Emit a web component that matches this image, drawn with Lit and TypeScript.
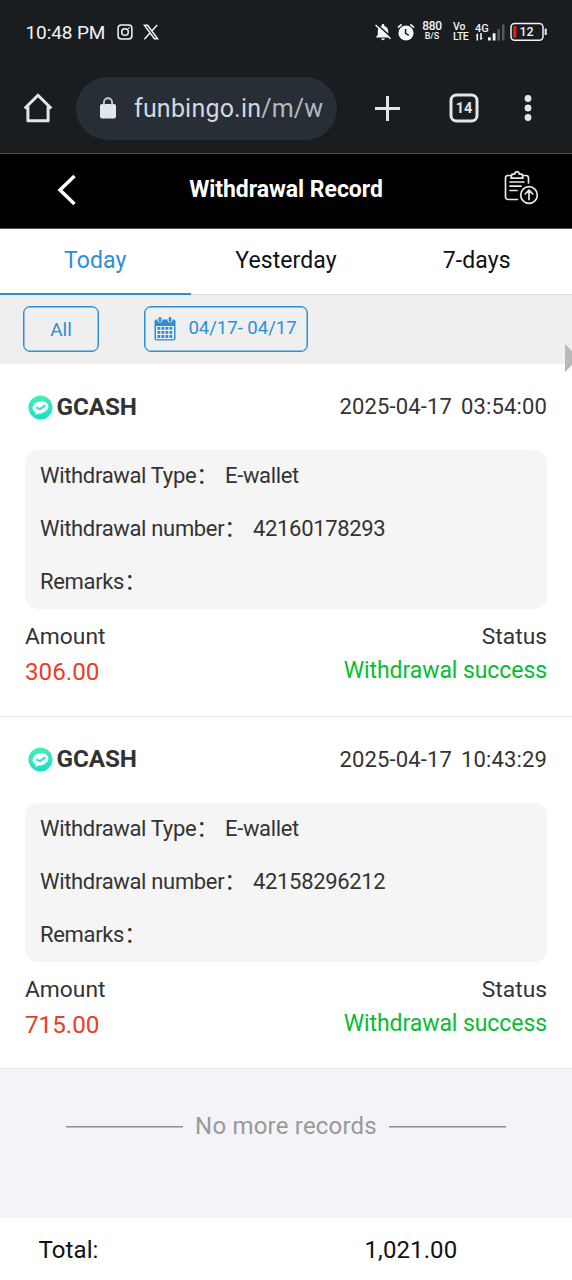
import { LitElement, html, css, svg } from "lit";
import { customElement, property } from "lit/decorators.js";

interface WithdrawalRecord {
  date: string;
  time: string;
  account: string;
  amount: string;
}

const records: WithdrawalRecord[] = [
  { date: "2025-04-17", time: "03:54:00", account: "42160178293", amount: "306.00" },
  { date: "2025-04-17", time: "10:43:29", account: "42158296212", amount: "715.00" },
];

const calendarDots = [0, 1, 2, 3].flatMap((c) =>
  [0, 1, 2].map((r) => svg`<rect x=${3.4 + c * 4} y=${9.9 + r * 4.1} width="2.9" height="2.8" rx=".4" fill="#2b8fd6"/>`)
);

@customElement("status-bar")
class StatusBar extends LitElement {
  static styles = css`
    :host { display: flex; align-items: center; height: 64px; padding: 0 25px 0 25.5px; box-sizing: border-box; color: #f1f3f4; }
    .time { font-size: 19px; line-height: 24px; width: 91px; padding-top: 1px; letter-spacing: -0.1px; white-space: nowrap; }
    svg { display: block; flex: none; }
    .x { margin-left: 10px; }
    .spacer { flex: 1; }
    .alarm { margin-left: 6px; }
    .stack { display: flex; flex-direction: column; align-items: center; font-weight: 500; }
    .speed { width: 22px; margin-left: 6px; padding-bottom: 2px; }
    .speed .big { font-size: 12px; line-height: 11px; letter-spacing: -0.3px; }
    .speed .small { font-size: 9px; line-height: 9px; }
    .volte { margin-left: 10px; width: 17px; align-items: flex-start; font-size: 10.5px; line-height: 10px; }
    .volte span + span { letter-spacing: -0.5px; }
    .signal { margin-left: 5px; }
    .battery { margin-left: 4px; }
  `;
  render() {
    return html`
      <span class="time">10:48 PM</span>
      <svg width="16" height="16" viewBox="0 0 16 16" fill="none" stroke="#f1f3f4" stroke-width="1.5">
        <rect x="1.1" y="1.1" width="13.8" height="13.8" rx="3.2"/><circle cx="8" cy="8" r="3.3"/><circle cx="12" cy="4" r=".4" stroke-width="1"/>
      </svg>
      <svg class="x" width="16" height="16" viewBox="0 0 16 16" fill="none" stroke="#f1f3f4" stroke-width="1.5">
        <path d="M1.4 1.200h3.200l10 13.600h-3.200z M14.200 .9L9 6.800 M7 9.100L1.400 15.200"/>
      </svg>
      <span class="spacer"></span>
      <svg width="16" height="18" viewBox="0 0 16 18">
        <path d="M8 1c.8 0 1.300.5 1.300 1.300v.6c2.400.6 3.900 2.500 3.900 5v4l1.600 1.800v.8H1.200v-.8l1.600-1.800v-4c0-2.500 1.500-4.400 3.900-5v-.6C6.700 1.500 7.200 1 8 1zM6.200 15.500h3.600c0 1-.8 1.700-1.800 1.700s-1.800-.7-1.800-1.700z" fill="#f1f3f4"/>
        <path d="M1.500 .8L16 14" stroke="#1a1d20" stroke-width="1.600"/><path d="M.5 2L15.500 15.800" stroke="#f1f3f4" stroke-width="1.500"/>
      </svg>
      <svg class="alarm" width="18" height="18" viewBox="0 0 18 18" fill="none">
        <circle cx="9" cy="10" r="7.600" fill="#f1f3f4"/><path d="M1 4.600L4.600 1.300M17 4.600L13.400 1.300" stroke="#f1f3f4" stroke-width="1.700"/><path d="M8.600 6v4.300l3.200 2" stroke="#1a1d20" stroke-width="1.500"/>
      </svg>
      <span class="stack speed"><span class="big">880</span><span class="small">B/S</span></span>
      <span class="stack volte"><span>Vo</span><span>LTE</span></span>
      <svg class="signal" width="31" height="20" viewBox="0 0 31 20" fill="#f1f3f4">
        <text x="0" y="9.800" font-size="11" font-weight="500">4G</text>
        <path d="M.5 13.600l2.600-2.500v7.400H1.500v-4.900zM5.200 11.100h1.600v4.900h1.200L5.200 18.500z"/>
        <rect x="13" y="15.300" width="2.800" height="3.200"/><rect x="17.700" y="11.300" width="2.800" height="7.200"/>
        <rect x="22.400" y="7" width="2.500" height="11.500" fill="#55585b"/><rect x="27" y="2.500" width="2.500" height="16" fill="#55585b"/>
      </svg>
      <svg class="battery" width="37" height="20" viewBox="0 0 37 20">
        <rect x="1" y="1.400" width="32" height="16.800" rx="3.600" fill="none" stroke="#f1f3f4" stroke-width="1.500"/>
        <rect x="3.200" y="3.800" width="3.200" height="12" rx="1" fill="#f01414"/><rect x="34.700" y="6.500" width="2" height="6.500" rx=".6" fill="#f1f3f4"/>
        <text x="16.500" y="14.200" text-anchor="middle" font-size="12.500" font-weight="500" fill="#f1f3f4">12</text>
      </svg>`;
  }
}

@customElement("browser-bar")
class BrowserBar extends LitElement {
  static styles = css`
    :host { display: flex; align-items: center; height: 90px; padding: 0 0 1px 23px; box-sizing: border-box; border-bottom: 1px solid #484b4d; }
    svg { display: block; flex: none; }
    .address { display: flex; flex: none; align-items: center; width: 261px; height: 63px; margin-left: 23px; padding-left: 23px; box-sizing: border-box; border-radius: 32px; background: #282e35; }
    .url { margin-left: 17px; padding-top: 2px; font-size: 25px; line-height: 32px; letter-spacing: 0.2px; color: #d3d8de; white-space: nowrap; }
    .path { color: #b3b9c0; }
    .plus { margin-left: 37px; }
    .tabs { margin-left: 48px; }
    .more { margin-left: 45px; }
  `;
  render() {
    return html`
      <svg width="30" height="32" viewBox="0 0 30 32" fill="none" stroke="#e3e6e9" stroke-width="3" stroke-linejoin="round">
        <path d="M1.700 16.500L15 3.200l13.300 13.300M4.900 14.500v14.200h20.200V14.500"/>
      </svg>
      <div class="address">
        <svg width="18" height="22" viewBox="0 0 18 22"><rect x="1" y="7" width="16" height="14.500" rx="2" fill="#e3e6e9"/><path d="M4.900 8V5.300a4.100 4.100 0 018.200 0V8" fill="none" stroke="#c4c8cc" stroke-width="1.900"/></svg>
        <span class="url">funbingo.in<span class="path">/m/w</span></span>
      </div>
      <svg class="plus" width="27" height="27" viewBox="0 0 27 27"><path d="M13.500 1v25M1 13.500h25" stroke="#e3e6e9" stroke-width="3"/></svg>
      <svg class="tabs" width="30" height="30" viewBox="0 0 30 30"><rect x="2" y="2" width="26" height="26" rx="5.500" fill="none" stroke="#e3e6e9" stroke-width="3"/><text x="15" y="20.300" text-anchor="middle" font-size="14.500" font-weight="700" fill="#e3e6e9">14</text></svg>
      <svg class="more" width="8" height="28" viewBox="0 0 8 28" fill="#e3e6e9"><circle cx="4" cy="4.500" r="3.400"/><circle cx="4" cy="14" r="3.400"/><circle cx="4" cy="23.500" r="3.400"/></svg>`;
  }
}

@customElement("record-card")
class RecordCard extends LitElement {
  @property({ attribute: false }) record!: WithdrawalRecord;
  static styles = css`
    :host { display: block; height: 352.5px; box-sizing: border-box; padding: 28px 25px 0; background: #fff; border-bottom: 1px solid #e4e4e4; color: #333; font-size: 22px; }
    .top { display: flex; align-items: center; height: 30px; padding-left: 3px; }
    .name { margin-left: 3.5px; padding-bottom: 1px; font-size: 24.300px; line-height: 28px; font-weight: 700; letter-spacing: -0.1px; }
    .when { margin-left: auto; padding-bottom: 1px; display: flex; gap: 9px; letter-spacing: 0.150px; }
    .details { display: flex; flex-direction: column; gap: 23px; margin-top: 28px; height: 159px; box-sizing: border-box; padding: 11px 15px; border-radius: 13px; background: #f5f5f5; letter-spacing: -0.33px; }
    .line { display: flex; line-height: 30px; height: 30px; white-space: nowrap; }
    .value { margin-left: 7px; }
    .summary { display: flex; justify-content: space-between; margin-top: 13px; line-height: 30px; font-size: 22.800px; white-space: nowrap; }
    .right { text-align: right; }
    .amount { margin-top: 5px; font-size: 24.200px; color: #e83e27; }
    .status { margin-top: 4px; font-size: 23px; letter-spacing: -0.08px; color: #0bbb32; }
  `;
  render() {
    const r = this.record;
    return html`
      <div class="top">
        <svg width="25" height="25" viewBox="0 0 25 25">
          <defs><linearGradient id="g" x2="0" y2="1"><stop stop-color="#45f0b4"/><stop offset="1" stop-color="#20dcc8"/></linearGradient></defs>
          <circle cx="12.500" cy="12.500" r="12" fill="url(#g)"/>
          <g transform="rotate(-14 12.500 12.500)"><path d="M12.500 6.300c4.500 0 8 2.600 8 6s-3.500 6-8 6c-1 0-2-.1-2.900-.4l-3.800 .4 .6-2.300C5.200 15 4.500 13.800 4.500 12.300c0-3.400 3.500-6 8-6z" fill="#f2fffc"/>
          <path d="M8.500 11.300l3 2.600 6.500-2.400" fill="none" stroke="#35dfbd" stroke-width="1.900"/></g>
        </svg>
        <span class="name">GCASH</span>
        <span class="when"><span>${r.date}</span><span>${r.time}</span></span>
      </div>
      <div class="details">
        <div class="line"><span>Withdrawal Type：</span><span class="value">E-wallet</span></div>
        <div class="line"><span>Withdrawal number：</span><span class="value">${r.account}</span></div>
        <div class="line"><span>Remarks：</span></div>
      </div>
      <div class="summary">
        <div><div>Amount</div><div class="amount">${r.amount}</div></div>
        <div class="right"><div>Status</div><div class="status">Withdrawal success</div></div>
      </div>`;
  }
}

@customElement("app-root")
class AppRoot extends LitElement {
  static styles = css`
    :host { display: flex; flex-direction: column; position: relative; width: 572px; height: 1280px; overflow: hidden; background: #fff; font-family: Roboto, "Noto Sans CJK SC", sans-serif; color: #111; }
    .chrome { background: #1a1d20; }
    svg { display: block; flex: none; }
    .header { display: grid; grid-template-columns: 90px 1fr 90px; align-items: center; height: 75px; padding-bottom: 4px; box-sizing: border-box; background: #000; color: #fff; border-bottom: 1px solid #555; }
    .back { justify-self: end; margin-right: 13px; margin-top: 1px; }
    .title { text-align: center; font-size: 23px; font-weight: 700; letter-spacing: -0.05px; white-space: nowrap; }
    .log { margin-left: 21px; margin-bottom: 4px; }
    .tabs { display: grid; grid-template-columns: repeat(3, 1fr); height: 66px; }
    .tab { padding-top: 1px; text-align: center; font-size: 23px; line-height: 62px; letter-spacing: 0.1px; border-bottom: 1px solid #ddd; box-sizing: border-box; }
    .tab.active { color: #2b8fd6; border-bottom: 2px solid #2b8fd6; }
    .filters { display: flex; align-items: center; gap: 45px; height: 69px; padding: 0 0 2px 23px; box-sizing: border-box; background: #efefef; }
    .chip { display: flex; align-items: center; justify-content: center; height: 46px; box-sizing: border-box; border: 1px solid #2b8fd6; box-shadow: inset 0 0 0 0.5px #2b8fd6; border-radius: 7px; color: #2b8fd6; font-size: 19px; white-space: nowrap; }
    .all { width: 76px; padding-top: 2px; }
    .range { width: 164px; gap: 12px; font-size: 18.600px; letter-spacing: -0.05px; }
    .range svg { margin-left: -1px; }
    .range span { padding-bottom: 1px; }
    .end { display: flex; align-items: center; justify-content: center; gap: 12px; height: 149px; padding-bottom: 35px; box-sizing: border-box; background: #f3f3f8; color: #999; font-size: 24px; letter-spacing: 0.200px; white-space: nowrap; }
    .rule { width: 117px; height: 2px; margin-top: 2px; box-sizing: border-box; border-top: 1px solid #8f8f92; background: #bdbdc1; }
    .footer { display: flex; align-items: center; flex: 1; padding: 1px 0 0 38.500px; font-size: 24px; letter-spacing: 0.1px; color: #111; }
    .label { width: 326px; }
    .handle { position: absolute; right: 0; top: 344px; }
  `;
  render() {
    return html`
      <div class="chrome"><status-bar></status-bar><browser-bar></browser-bar></div>
      <div class="header">
        <svg class="back" width="20" height="32" viewBox="0 0 20 32"><path d="M17.500 2L3 16l14.500 14" fill="none" stroke="#fff" stroke-width="3.500"/></svg>
        <div class="title">Withdrawal Record</div>
        <svg class="log" width="36" height="36" viewBox="0 0 36 36" fill="none" stroke="#e8e8e8" stroke-width="1.700" stroke-linecap="round" stroke-linejoin="round">
          <path d="M14.500 30.500H5A2.500 2.500 0 012.500 28V9A2.500 2.500 0 015 6.500h3M20 6.500h3A2.500 2.500 0 0125.500 9v5M8 9.200l1-4h2.500c.5-1.600 1.200-2.600 2.500-2.600s2 1 2.500 2.600H19l1 4zM7 13h14M7 17.200h11M7 21.500h7"/>
          <circle cx="26" cy="26" r="8.300"/><path d="M26 30.500v-9M22.200 25l3.800-3.800 3.800 3.800"/>
        </svg>
      </div>
      <div class="tabs"><div class="tab active">Today</div><div class="tab">Yesterday</div><div class="tab">7-days</div></div>
      <div class="filters">
        <div class="chip all">All</div>
        <div class="chip range">
          <svg width="22" height="24" viewBox="0 0 22 24">
            <rect x=".5" y="2.500" width="21" height="21" rx="2" fill="#2b8fd6"/><rect x="2" y="9" width="18" height="13.200" fill="#efefef"/>
            <circle cx="6" cy="3.200" r="2.400" fill="#efefef"/><circle cx="16" cy="3.200" r="2.400" fill="#efefef"/>
            <rect x="4.700" y="0" width="2.600" height="5" rx="1.200" fill="#2b8fd6"/><rect x="14.700" y="0" width="2.600" height="5" rx="1.200" fill="#2b8fd6"/>
            ${calendarDots}
          </svg>
          <span>04/17- 04/17</span>
        </div>
      </div>
      ${records.map((r) => html`<record-card .record=${r}></record-card>`)}
      <div class="end"><span class="rule"></span><span>No more records</span><span class="rule"></span></div>
      <div class="footer"><span class="label">Total:</span><span>1,021.00</span></div>
      <svg class="handle" width="7" height="28" viewBox="0 0 7 28"><path d="M0 0l7 7v14l-7 7z" fill="#b9b9b9"/></svg>`;
  }
}
